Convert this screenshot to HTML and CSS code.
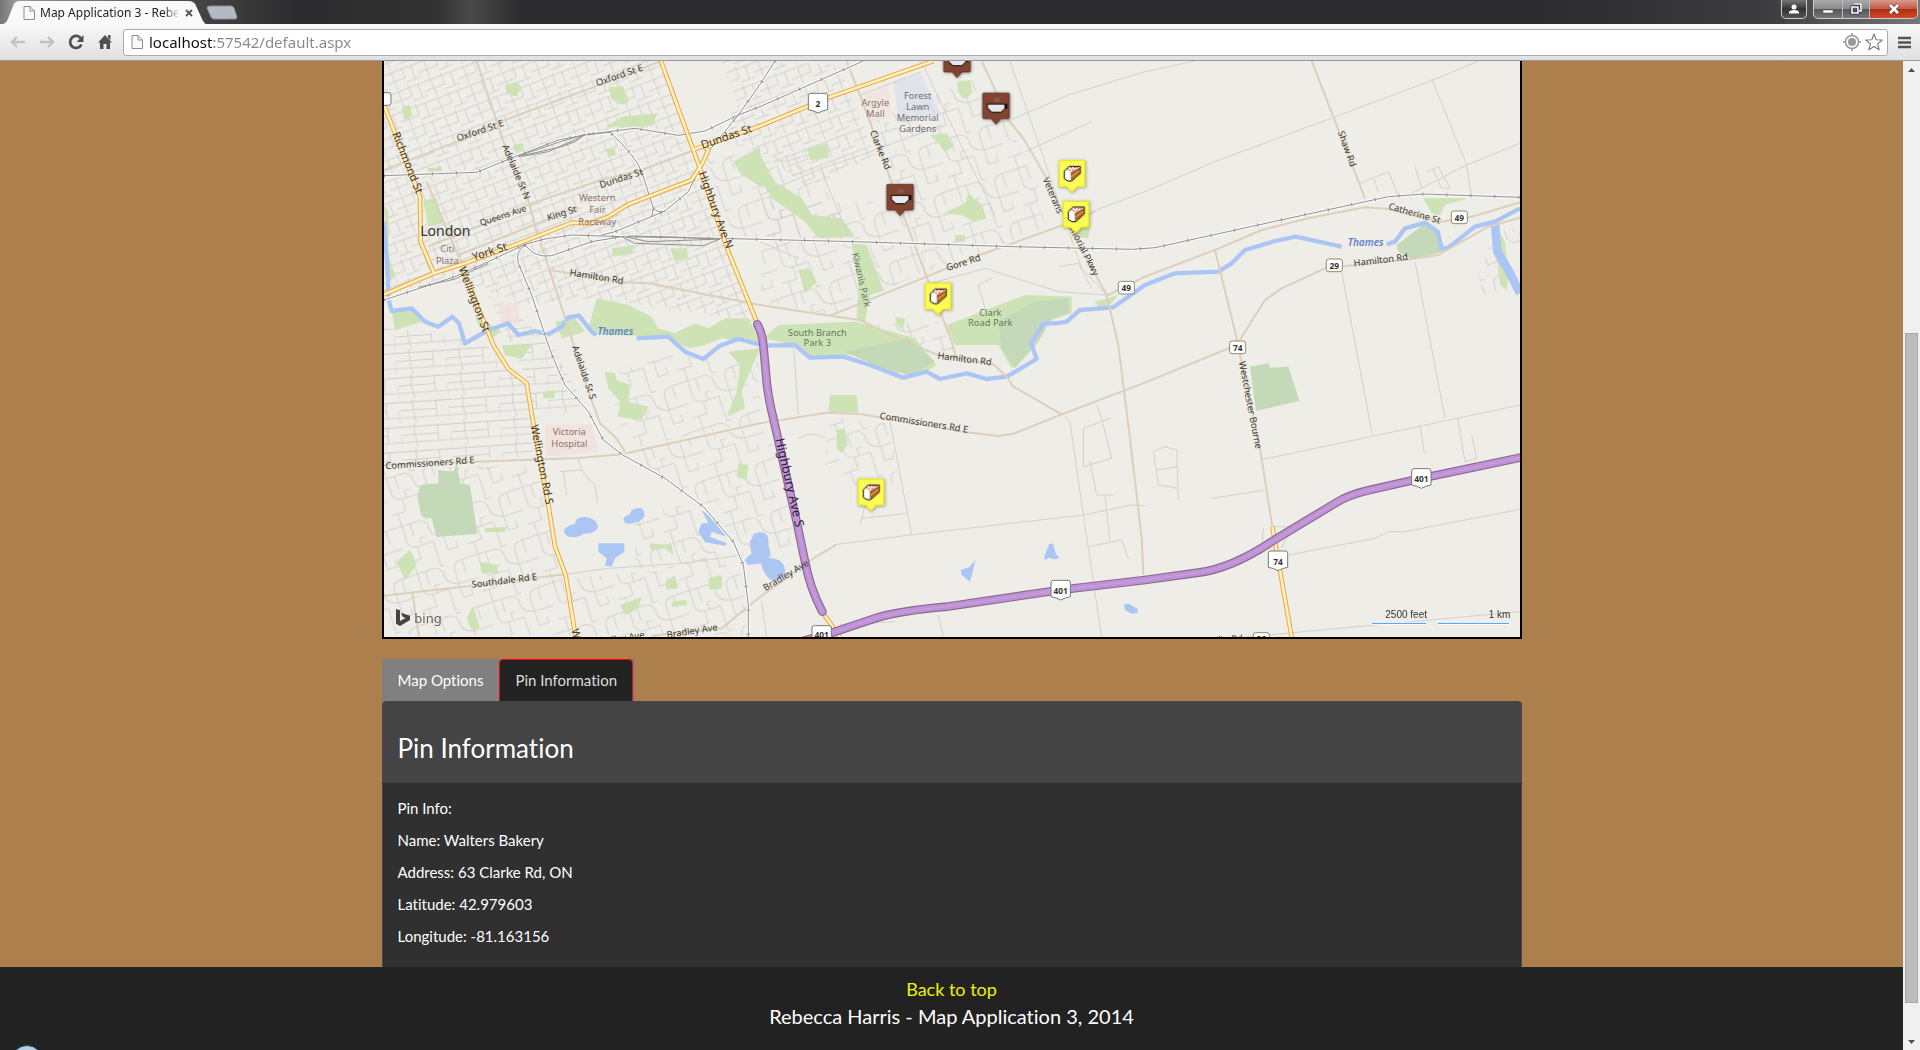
FILE: index.html
```html
<!DOCTYPE html>
<html lang="en">
<head>
<meta charset="utf-8">
<title>Map Application 3 - Rebecca Harris</title>
<link rel="stylesheet" href="styles.css">
</head>
<body>
<header class="browser">
  <div class="tabstrip">
    <div class="browser-tab">
      <svg class="tab-shape" viewBox="0 0 210 25" preserveAspectRatio="none"><path d="M0 25C5 24 7 22 8 19L14 4Q16 1 20 1H190Q195 1 197 4L204 19Q206 24 210 25Z" fill="#f9f9f9"/></svg>
      <svg class="doc-icon" viewBox="0 0 12 14"><path d="M1 .5H7L11.500 5V13.500H1Z" fill="#fafafa" stroke="#8c8c8c"/><path d="M7 .5V5H11.500" fill="none" stroke="#8c8c8c"/></svg>
      <span class="tab-title">Map Application 3 - Rebec</span>
      <button class="tab-close" aria-label="Close tab"><svg viewBox="0 0 8 8"><path d="M1 1L7 7M7 1L1 7" stroke="#555" stroke-width="1.800"/></svg></button>
    </div>
    <button class="new-tab" aria-label="New tab"><svg viewBox="0 0 32 15"><path d="M4 1H25Q27 1 28 3L31 12Q31 14 29 14H8Q6 14 5 12L1 3Q1 1 4 1Z" fill="#b4bac3" stroke="#8a9099"/></svg></button>
    <div class="strip-space"></div>
    <button class="user-button" aria-label="User"><svg viewBox="0 0 10 10"><circle cx="5" cy="3" r="2.500" fill="#fff"/><path d="M0 9.500V8Q1 6 5 6T10 8V9.500Z" fill="#fff"/></svg></button>
    <div class="window-buttons">
      <button class="win-min" aria-label="Minimize"><svg viewBox="0 0 12 12"><rect x="1" y="7" width="10" height="3" fill="#fff" stroke="#445" stroke-width=".5"/></svg></button>
      <button class="win-max" aria-label="Restore"><svg viewBox="0 0 12 12"><path d="M4 1H11V8H9M2 4H8V10H2Z" fill="none" stroke="#334" stroke-width="3"/><path d="M4 1H11V8H9M2 4H8V10H2Z" fill="none" stroke="#fff" stroke-width="1.600"/></svg></button>
      <button class="win-close" aria-label="Close"><svg viewBox="0 0 12 12"><path d="M2 2L10 10M10 2L2 10" stroke="#544" stroke-width="4"/><path d="M2 2L10 10M10 2L2 10" stroke="#fff" stroke-width="2.600"/></svg></button>
    </div>
  </div>
  <div class="toolbar">
    <button class="tool" aria-label="Back"><svg viewBox="0 0 16 16"><path d="M15 8H2M7 3L2 8L7 13" fill="none" stroke="#c2c2c2" stroke-width="2.400"/></svg></button>
    <button class="tool" aria-label="Forward"><svg viewBox="0 0 16 16"><path d="M1 8H14M9 3L14 8L9 13" fill="none" stroke="#c2c2c2" stroke-width="2.400"/></svg></button>
    <button class="tool" aria-label="Reload"><svg viewBox="0 0 16 16"><path d="M13 4.500A6 6 0 1 0 13.500 10.500" fill="none" stroke="#505050" stroke-width="2.800"/><path d="M15.500 1V8H8.500Z" fill="#505050"/></svg></button>
    <button class="tool" aria-label="Home"><svg viewBox="0 0 16 16"><path d="M8 1L15 8.500H13V15H9.500V10H6.500V15H3V8.500H1Z" fill="#505050"/><path d="M11 1H13.500V6L11 4Z" fill="#505050"/></svg></button>
    <div class="omnibox">
      <svg class="doc-icon" viewBox="0 0 12 14"><path d="M1 .5H7L11.500 5V13.500H1Z" fill="#fafafa" stroke="#8c8c8c"/><path d="M7 .5V5H11.500" fill="none" stroke="#8c8c8c"/></svg>
      <input class="url" type="text" aria-label="Address" value="localhost:57542/default.aspx">
      <button class="omni-icon" aria-label="Location"><svg viewBox="0 0 18 18"><circle cx="9" cy="9" r="6.500" fill="none" stroke="#999" stroke-width="1.600"/><circle cx="9" cy="9" r="4" fill="#999"/><path d="M9 0V3M9 15V18M0 9H3M15 9H18" stroke="#999" stroke-width="1.600"/></svg></button>
      <button class="omni-icon" aria-label="Bookmark"><svg viewBox="0 0 18 18"><path d="M9 1L11.200 6.700L17.300 7L12.600 10.900L14.200 16.800L9 13.500L3.800 16.800L5.400 10.900L.7 7L6.800 6.700Z" fill="#fff" stroke="#777" stroke-width="1.100" stroke-linejoin="round"/></svg></button>
    </div>
    <button class="menu" aria-label="Menu"><svg viewBox="0 0 13 13"><path d="M0 2H13M0 6.500H13M0 11H13" stroke="#555" stroke-width="2.600"/></svg></button>
  </div>
</header>

<div class="viewport">
  <div class="page">
    <main class="content">
      <div class="container">
        <div class="map">
          <svg viewBox="27 18 3408 1728" preserveAspectRatio="xMidYMid slice" role="img" aria-label="Map of London, Ontario">
            <defs>
              <pattern id="grid" width="104" height="60" patternUnits="userSpaceOnUse" patternTransform="rotate(-21)"><path class="st" d="M0 8H104M0 36H60M26 8V60M60 0V36M60 50H104M88 8V50"/></pattern>
              <pattern id="rows" width="150" height="74" patternUnits="userSpaceOnUse" patternTransform="rotate(-4)"><path class="st" d="M0 10H150M0 34H110M0 56H150M40 0V34L48 74M110 10V56M150 34V74"/></pattern>
              <pattern id="burbs" width="190" height="150" patternUnits="userSpaceOnUse" patternTransform="rotate(-18)"><path class="st" d="M0 20H70Q95 22 95 50T130 85H190M20 20V70Q22 90 45 92H95V150M45 20V60M45 92V130H0M130 85V40Q132 20 160 20H190M160 20V60M130 85V130H160V110M60 92V70H75M20 130V150M20 0V20M95 0V20H110"/></pattern>
              <g id="coffee">
                <path d="M-38 -92H38Q40 -92 40 -90V-17L38 -15H15L0 2L-15 -15H-38L-40 -17V-90Z" fill="#804430" stroke="#532a1c" stroke-width="2"/>
                <path d="M-5 -78l3 4-3 4 3 4M1 -78l3 4-3 4 3 4M7 -78l3 4-3 4 3 4" fill="none" stroke="#9b8a84" stroke-width="2"/>
                <path d="M24 -57H32V-47H22" fill="none" stroke="#000" stroke-width="4"/>
                <path d="M-26 -59H27V-46L14 -34H-12L-26 -47Z" fill="#e8e8ec" stroke="#000" stroke-width="3"/>
              </g>
              <g id="cake">
                <path d="M-38 -92H38V-15H16L0 2L-16 -15H-38Z" fill="#fbfd57" stroke="#f0ea1d" stroke-width="4"/>
                <path d="M-23 -61L-9 -75H25V-54L-1 -31H-12L-23 -38Z" fill="#fff" stroke="#000" stroke-width="3"/>
                <path d="M-4 -57L24 -72V-54L-3 -32Z" fill="#a75d20"/><path d="M-2 -44L22 -62" stroke="#f0a35a" stroke-width="4"/>
                <path d="M-14 -67h4M-5 -71h4M-8 -63h4M5 -71h4M1 -65h4M13 -72h4" stroke="#e02030" stroke-width="4"/>
              </g>
              <path id="shield" d="M-29 -22Q-29 -29 -22 -29H22Q29 -29 29 -22V20Q15 22 0 30Q-15 22 -29 20Z"/>
              <rect id="box" x="-24" y="-19" width="48" height="38" rx="7"/>
            </defs>
            <rect x="27" y="18" width="3408" height="1728" fill="#eeede7"/>

            <g fill="url(#grid)">
              <path d="M27 18H855L960 300L1140 800L660 730L430 750L300 690L180 680L27 720Z"/>
              <path d="M1040 18H1155L1390 30L1440 150L1500 300L1300 400L1155 290L1010 250L1090 150Z"/>
            </g>
            <path fill="url(#rows)" d="M27 820L230 840L350 880L450 990L480 1205L27 1225ZM340 720L520 850L640 1070L470 1090L460 980Z"/>
            <g fill="url(#burbs)">
              <path d="M1480 200L1830 60L1990 400L2010 520L1660 650L1560 400Z"/>
              <path d="M1160 440H1560L1650 650L1370 780L1160 740Z"/>
              <path d="M980 300H1290L1430 540L1080 545Z"/>
              <path d="M27 1240L490 1230L600 1740H27Z"/>
              <path d="M575 1570L960 1540L1110 1560V1740H620Z"/>
              <path d="M800 1180L1180 1110L1270 1500L1130 1520L1000 1350L780 1230Z"/>
              <path d="M690 960L890 900L1150 920L1155 1100L760 1180Z"/>
              <path d="M1360 1085L1540 1105L1570 1280L1470 1310L1350 1230Z"/>
              <path d="M1400 810L1690 800L1740 890L1600 880Z"/>
              <path d="M3310 660L3360 530L3435 520V560L3380 580L3400 705L3325 718Z"/>
              <path d="M780 1390L940 1340L990 1450L1060 1540L780 1540Z"/>
            </g>

            <g class="park">
              <path d="M390 90L430 80L435 105L425 125L395 115ZM700 95H745L762 140L745 150L710 135ZM80 155L105 150L112 182L88 195ZM690 217L740 185L845 175L835 210L790 218L730 215ZM415 270L445 265V285L420 292ZM145 435L185 430L205 505L160 515ZM1075 320L1155 275L1165 400L1100 360ZM695 285L718 275L722 300L700 305ZM885 580H935L940 608L900 620ZM710 580L780 570L770 595L715 605ZM160 340L200 335V347L160 350Z"/>
              <path d="M665 730L760 750L830 785L850 820L900 835L960 805L1000 820L1050 790L1120 790L1160 870L1100 860L1040 850L990 870L940 880L880 845L690 840L640 820ZM50 770L110 765L140 800L60 825ZM380 870L470 870L440 912L390 900ZM300 780L380 830L350 850L310 810ZM540 800L600 790L630 830L560 850ZM27 450L40 470L40 600L60 660L40 690Z"/>
              <path d="M1155 300L1200 380L1280 430L1310 480L1400 490L1440 545L1330 550L1290 500L1190 430L1155 370ZM1430 565L1475 570L1525 705L1485 720L1470 800L1445 790L1450 680ZM1295 280L1355 265L1362 308L1305 315ZM1745 80L1785 75L1792 115L1765 132L1750 110ZM1665 240L1715 235L1735 275L1710 292L1690 265ZM1705 475L1770 445L1780 415L1820 450L1835 490L1800 500L1760 480ZM1270 645L1300 640L1325 680L1290 715L1280 680ZM1560 785L1590 790L1585 825L1565 810ZM1740 540H1770V560H1740ZM2090 510L2145 510L2140 550L2090 545Z"/>
              <path d="M1715 810L1950 720L2090 725V775L2030 795L1975 860L1985 870L1910 940L1870 870L1740 870ZM1165 850L1210 810L1440 800L1620 850L1685 930L1655 950L1560 955L1430 900L1290 905L1260 870ZM1365 1020H1445L1450 1073L1360 1072ZM1385 1125L1410 1120L1418 1170L1400 1195L1385 1180Z"/>
              <path d="M3145 430H3280L3210 450L3195 480L3170 475ZM2160 740L2230 720L2200 755L2170 755ZM3365 515L3390 560L3400 650L3395 705L3375 690L3365 600ZM690 950L720 955L725 975L765 990L760 1040L820 1055L800 1095L730 1085L735 1040L700 1000ZM1060 890L1155 880L1120 960L1100 1010L1110 1060L1055 1085L1085 1010L1095 930ZM505 1010L540 1005L538 1030L505 1030ZM1090 1225L1120 1230L1115 1275L1085 1265ZM65 1520L105 1485L125 1530L90 1575ZM315 1520L365 1530L370 1555H320ZM825 1465L890 1470L895 1500L870 1480L825 1485ZM870 1580L900 1560L910 1600L875 1605ZM1000 1570L1040 1560L1042 1600L1005 1605ZM735 1650L800 1625L790 1660L750 1680ZM330 1420L395 1415L390 1430L330 1432ZM275 1690L295 1655L315 1720L290 1725ZM890 1640L935 1635V1650L890 1655Z"/>
            </g>
            <g class="park-dark">
              <path d="M135 1290L190 1285V1245L235 1250L245 1225L255 1285L285 1290L307 1437L185 1445L170 1390L140 1385L128 1330Z"/>
              <path d="M2625 935L2680 925L2685 938L2740 935L2773 1037L2643 1068Z"/>
              <path d="M3065 570L3150 505L3185 530L3205 590L3110 612L3070 590Z"/>
              <path d="M1870 800L1980 740L2080 730V775L2030 790L1990 860L1920 940L1880 880ZM1410 890L1600 850L1680 920L1600 960L1500 930Z"/>
            </g>
            <g fill="#f3ddd9"><path d="M510 1110L650 1108L670 1190L515 1205ZM365 745L430 740L435 810L380 800Z" opacity=".7"/><path d="M1450 120L1540 90L1550 190L1480 200Z" opacity=".5"/></g>
            <path d="M1555 80L1635 55L1700 180L1570 190Z" fill="#d9dcec" opacity=".6"/>

            <g class="water">
              <path d="M567 1425Q580 1408 600 1408Q600 1385 630 1386Q665 1390 669 1415Q665 1435 625 1436Q610 1450 580 1445Q568 1440 567 1425ZM745 1390Q755 1380 765 1378Q770 1355 800 1360Q815 1375 805 1390Q780 1410 750 1405ZM670 1465H748V1490L720 1510L710 1535L690 1532L695 1510L670 1490ZM980 1365L1040 1410L1055 1445L1010 1430L1005 1445L1055 1465L1050 1472L990 1462L970 1430L980 1405H1000Z"/>
              <path d="M1140 1435Q1185 1420 1180 1470Q1190 1500 1180 1510Q1230 1510 1230 1550Q1225 1580 1190 1575Q1165 1560 1158 1525L1120 1530L1108 1515L1130 1495L1125 1460ZM1757 1545L1782 1537L1801 1515L1793 1550L1785 1580L1760 1560ZM2008 1505L2022 1468L2034 1465L2042 1495L2053 1510L2035 1513L2022 1508L2010 1516ZM2247 1648L2262 1646L2288 1662V1674L2270 1676L2250 1665Z"/>
            </g>
            <g class="river">
              <path d="M27 500L36 620L42 740L50 768L110 760L150 800L190 815L232 785L252 805L270 865L340 825L400 805L430 840L480 828L520 838L560 815L580 787L612 782L650 830L665 840M785 850L880 845L930 890L985 912L1035 872L1090 852L1170 872L1260 870L1305 908L1405 905L1485 930L1585 968L1655 950L1695 972L1775 955L1835 972L1895 965L1985 912L1968 865L2005 805L2045 805L2075 800L2115 765L2215 757L2310 690L2400 655L2530 650L2570 625L2610 585L2700 558L2762 545L2900 575M3035 568L3060 560L3090 520L3150 503L3188 530L3200 580L3220 578L3300 515L3360 500L3435 460"/>
              <path class="wide" d="M3360 505L3367 590L3400 645L3435 715"/>
            </g>

            <g class="minor">
              <path d="M1155 420L1340 340L1460 300L1700 210M1340 350L1420 540M1455 120L1640 50M1640 18L1710 170L1860 480M1905 18L2120 640L2195 720M1895 200L2080 120L2310 50L2460 18M1950 290L2150 200M2150 470L2310 410L2520 320L3175 75L3310 18M3170 70L3275 330L3290 430M3100 420L3275 330L3435 265M2955 385L3040 350L3070 420M2995 370L3010 410M3120 335L3140 400M3155 350L3190 335L3225 400H3200L3175 345"/>
              <path d="M1255 860L1270 1080M1545 1100L1610 1440M1460 1390L1595 1375M1455 1410L1480 1310M2065 1080L2085 1100L2125 1380L2180 1746M2165 1050L2180 1090L2210 1210L2125 1235L2125 1120L2205 1090M2145 1220L2165 1320L2215 1320M2190 1325L2205 1460M2140 1475L2240 1455L2260 1510M2310 1352L2270 1350L2125 1380L1605 1440L1385 1468"/>
              <path d="M2900 650L2992 1140M3120 620L3210 1090M2655 1215L3435 1050M3135 1110L3148 1195M3248 1088L3270 1220L3305 1210L3290 1140M2335 1190L2370 1175L2405 1185L2410 1335M2335 1190L2350 1290L2408 1300M2345 1245L2408 1235M2510 1330L2665 1306M2740 1500L3000 1450L3040 1430H3090L3435 1363M2610 1746L3435 1670M1690 1680L1705 1746M1160 1640L1175 1746M1395 1710L1560 1700M2665 1420Q2660 1470 2665 1480M2690 1415H2750L2720 1480"/>
              <path d="M1830 640L2050 710L2190 720M1830 640L1650 690M2050 635L2110 625L2150 700M1155 560L1270 610M1850 670L1810 690L1830 760M1270 1150Q1310 1125 1350 1150M610 1210Q620 1260 660 1290L668 1345M555 1250L620 1245M565 1250L575 1320M570 1558L700 1540L920 1525L1105 1500"/>
            </g>
            <g class="tan">
              <path d="M27 345L240 262L390 195L660 95L858 18M305 18L385 260L460 435L485 530L525 650L590 850L650 1035L675 1105L720 1145L750 1190M155 380L225 545L262 630M470 445L680 375L800 345L955 287M160 575L320 510L470 445M250 600L500 500L610 455"/>
              <path d="M525 645L750 682L820 685L1155 750L1365 782L1455 795L1600 865L1690 900L1855 928L1895 965L1915 995L2060 1078"/>
              <path d="M27 1230L300 1220L600 1210L740 1198L1155 1105L1355 1073L1455 1077L1775 1132L1870 1143L1915 1136L2060 1078L2310 983L2585 870L2670 735L2720 700L2850 640L3110 612L3190 600L3340 515L3435 488"/>
              <path d="M1365 782L1655 665L1815 600L2065 510L2160 470M2195 722L2310 665L2520 585L2660 525L2800 490L2970 457L3040 462L3200 500L3290 485L3435 442M2520 585L2585 850L2595 900L2655 1180L2692 1415M2810 18L2970 430"/>
              <path d="M1415 18L1485 200L1545 370L1585 480L1655 665L1730 860L1745 910M1820 18L1863 110L1900 195L1945 250L2015 370L2085 520L2195 720L2230 870L2265 1150L2300 1450L2305 1560"/>
              <path d="M27 1622L290 1592L570 1558M112 1612L132 1746M830 1742L1040 1720L1150 1630L1315 1510L1385 1468"/>
            </g>
            <g class="rail-bed"><path id="rails" d="M27 362L160 357L305 352L420 305L550 255L640 238L780 220L910 241L990 228L1090 180L1155 155L1465 18M1200 18L1155 88L1090 180L1000 290L940 410L870 468L720 530L680 540M640 238L705 232Q780 300 800 350L835 460L830 485M835 460Q850 475 870 468M27 735L240 665L340 620L450 568L510 552L590 540L740 545L1070 551L1155 553L1435 560L1695 568L1915 575L2270 583L2340 578L2695 500L3040 425L3145 417L3435 427M450 570Q480 610 530 602L650 560L740 545M450 570Q420 590 430 625L470 720L520 870L535 910L570 990L640 1070L685 1155L740 1198L870 1270L985 1355L1075 1460L1105 1530L1120 1650V1746"/></g>
            <use href="#rails" class="rail"/><use href="#rails" class="ties"/>
            <path class="rail" d="M430 305L560 275L600 260L630 238M430 303L550 262L630 238M440 304L520 290L630 240M740 545L780 565L985 572L1035 552M750 545L820 560L1035 552M760 543L900 546L1035 552M130 697L240 672L340 625"/>

            <g class="road-edge"><path id="yellow" d="M27 150L135 425L137 560L177 655M27 718L177 655L270 625L440 562L590 503L650 505L700 485L760 448L950 375L985 320L1000 285L985 275M958 283L1155 213L1295 155L1355 130L1675 18M858 18L975 340L1060 590L1145 800M262 640L355 870L400 942L455 985L475 1105L520 1350L540 1475L572 1560L602 1746M2692 1415L2750 1746M1345 1675L1395 1746"/></g>
            <use href="#yellow" class="road-mid"/><use href="#yellow" class="road-core"/>
            <g class="hwy-edge"><path id="hwy" d="M1147 808Q1162 835 1165 870L1175 980Q1180 1030 1195 1090L1265 1400L1290 1520Q1305 1600 1342 1670M1290 1756L1375 1732L1500 1690Q1570 1668 1715 1655L2055 1605L2310 1575L2470 1553Q2570 1540 2690 1460L2880 1345Q2920 1320 2980 1306L3130 1272L3435 1208"/></g>
            <use href="#hwy" class="hwy"/><use href="#hwy" class="hwy-core"/>

            <g class="label">
              <text transform="translate(315 226) rotate(-19)">Oxford St E</text>
              <text transform="translate(733 60) rotate(-19)">Oxford St E</text>
              <text transform="translate(425 350) rotate(67)">Adelaide St N</text>
              <text transform="translate(384 482) rotate(-18)" class="small">Queens Ave</text>
              <text transform="translate(560 474) rotate(-18)">King St</text>
              <text transform="translate(738 369) rotate(-18)">Dundas St</text>
              <text transform="translate(665 664) rotate(9)">Hamilton Rd</text>
              <text transform="translate(628 952) rotate(71)">Adelaide St S</text>
              <text transform="translate(1517 284) rotate(68)">Clarke Rd</text>
              <text transform="translate(2035 421) rotate(67)">Veterans</text>
              <text transform="translate(2129 588) rotate(63)">morial Pkwy</text>
              <text transform="translate(1765 622) rotate(-18)">Gore Rd</text>
              <text transform="translate(2917 281) rotate(70)">Shaw Rd</text>
              <text transform="translate(3119 474) rotate(16)">Catherine St</text>
              <text transform="translate(3017 614) rotate(-7)">Hamilton Rd</text>
              <text transform="translate(1769 911) rotate(7)">Hamilton Rd</text>
              <text transform="translate(1647 1102) rotate(9)">Commissioners Rd E</text>
              <text transform="translate(165 1223) rotate(-4)">Commissioners Rd E</text>
              <text transform="translate(388 1576) rotate(-7)">Southdale Rd E</text>
              <text transform="translate(951 1727) rotate(-9)">Bradley Ave</text>
              <text transform="translate(732 1750) rotate(-9)">Bradley Ave</text>
              <text transform="translate(1232 1560) rotate(-31)">Bradley Ave</text>
              <text transform="translate(2627 1050) rotate(79)">Westchester Bourne</text>
              <text transform="translate(2530 1754) rotate(-4)">Crumlin Rd</text>
            </g>
            <g class="label major">
              <text transform="translate(100 322) rotate(68)">Richmond St</text>
              <text transform="translate(343 588) rotate(-18)">York St</text>
              <text transform="translate(300 732) rotate(69)">Wellington St</text>
              <text transform="translate(503 1228) rotate(79)">Wellington Rd S</text>
              <text transform="translate(622 1802) rotate(76)">Wellington</text>
              <text transform="translate(1053 243) rotate(-19)">Dundas St</text>
              <text transform="translate(1025 464) rotate(70)">Highbury Ave N</text>
              <text transform="translate(1246 1282) rotate(77)" class="highway">Highbury Ave S</text>
            </g>
            <g class="label place">
              <text x="667" y="428">Western</text><text x="667" y="464">Fair</text><text x="667" y="500">Raceway</text>
              <text x="217" y="581">Citi</text><text x="217" y="616">Plaza</text>
              <text x="1501" y="141">Argyle</text><text x="1501" y="176">Mall</text>
              <text x="583" y="1130">Victoria</text><text x="583" y="1166">Hospital</text>
            </g>
            <g class="label garden">
              <text x="1628" y="122">Forest</text><text x="1628" y="155">Lawn</text><text x="1628" y="188">Memorial</text><text x="1628" y="221">Gardens</text>
            </g>
            <g class="label green">
              <text x="1846" y="773">Clark</text><text x="1846" y="803">Road Park</text>
              <text x="1327" y="833">South Branch</text><text x="1327" y="863">Park 3</text>
              <text transform="translate(1460 674) rotate(77)">Kiwanis Park</text>
            </g>
            <g class="label stream"><text x="721" y="829">Thames</text><text x="2972" y="562">Thames</text></g>
            <text class="label city" x="211" y="527">London</text>

            <g class="sign">
              <use href="#shield" x="1329" y="144"/><use href="#shield" x="2057" y="1605"/><use href="#shield" x="3139" y="1270"/><use href="#shield" x="1340" y="1741"/><use href="#shield" x="2709" y="1517"/><use href="#box" x="24" y="132"/>
              <use href="#box" class="county" x="2254" y="698"/><use href="#box" class="county" x="3253" y="487"/><use href="#box" class="county" x="2878" y="631"/><use href="#box" class="county" x="2588" y="877"/><use href="#box" class="county" x="2659" y="1752"/>
            </g>
            <g class="label number">
              <text x="1329" y="144">2</text><text x="2057" y="1605">401</text><text x="3139" y="1270">401</text><text x="1340" y="1738">401</text><text x="2709" y="1519">74</text>
              <text x="2254" y="698">49</text><text x="3253" y="487">49</text><text x="2878" y="631">29</text><text x="2588" y="877">74</text><text x="2659" y="1750">36</text>
            </g>

            <g class="pins">
              <use href="#coffee" x="1746" y="66"/><use href="#coffee" x="1863" y="206"/><use href="#coffee" x="1575" y="480"/>
              <use href="#cake" x="2091" y="409"/><use href="#cake" x="2103" y="531"/><use href="#cake" x="1689" y="777"/><use href="#cake" x="1488" y="1365"/>
            </g>

            <g class="bing"><path d="M63 1662L75 1666V1698L92 1689L83 1685L78 1673L105 1682V1695L75 1713L63 1706Z" fill="#444"/><text x="118" y="1703">bing</text></g>
            <g class="scale"><path class="bar-edge" d="M2989 1705H3156M3187 1705H3404"/><path class="bar" d="M2991 1705H3154M3189 1705H3402"/><text x="3156" y="1688">2500 feet</text><text x="3406" y="1688">1 km</text></g>
          </svg>
        </div>

        <div class="tabs" role="tablist">
          <button role="tab" class="tab" aria-selected="false">Map Options</button>
          <button role="tab" class="tab active" aria-selected="true">Pin Information</button>
        </div>
        <section class="panel">
          <h2 class="panel-title">Pin Information</h2>
          <div class="panel-body">
            <p>Pin Info:</p>
            <p>Name: Walters Bakery</p>
            <p>Address: 63 Clarke Rd, ON</p>
            <p>Latitude: 42.979603</p>
            <p>Longitude: -81.163156</p>
          </div>
        </section>
      </div>
    </main>
    <footer class="footer">
      <a class="top-link" href="#">Back to top</a>
      <p class="credit">Rebecca Harris - Map Application 3, 2014</p>
      <span class="orb"></span>
    </footer>
  </div>
  <div class="scrollbar">
    <button class="arrow" aria-label="Scroll up"><svg viewBox="0 0 7 4"><path d="M0 4L3.500 0L7 4Z" fill="#505050"/></svg></button>
    <div class="track-before"></div>
    <div class="thumb"></div>
    <div class="track-after"></div>
    <button class="arrow" aria-label="Scroll down"><svg viewBox="0 0 7 4"><path d="M0 0L3.500 4L7 0Z" fill="#505050"/></svg></button>
  </div>
</div>
</body>
</html>
```
FILE: styles.css
```css
* { box-sizing: border-box; }
html, body { height: 100%; }
body {
  margin: 0;
  display: flex;
  flex-direction: column;
  overflow: hidden;
  font-family: Lato, sans-serif;
  font-size: 15px;
  font-variant-ligatures: none;
  color: #fff;
  background: #ad7f4c;
}
button { margin: 0; padding: 0; border: 0; background: none; font: inherit; font-variant-ligatures: none; color: inherit; }
svg { display: block; }
p, h2 { margin: 0; }

/* Browser window */
.browser { flex: none; font-family: "Noto Sans", sans-serif; color: #222; }
.tabstrip {
  height: 24px;
  display: flex;
  align-items: flex-start;
  background: linear-gradient(90deg, #777 0, #999 16px, #444 200px, #2b2b2d 300px, #333 440px, #4a4a4a 470px, #2c2c2e 520px, #2c2c2e 80%, #3c3c3e 92%, #777 100%);
}
.browser-tab { position: relative; width: 208px; height: 24px; display: flex; align-items: center; padding: 1px 14px 0 23px; }
.tab-shape { position: absolute; left: 0; top: 0; width: 208px; height: 25px; }
.doc-icon { position: relative; flex: none; width: 12px; height: 14px; }
.tab-title {
  position: relative;
  width: 138px;
  margin-left: 5px;
  overflow: hidden;
  white-space: nowrap;
  font-size: 12px;
  line-height: 18px;
  mask-image: linear-gradient(90deg, #000 124px, transparent 140px);
}
.tab-close { position: relative; margin-left: 7px; }
.tab-close svg { width: 8px; height: 8px; }
.new-tab { margin-top: 5px; margin-left: -2px; }
.new-tab svg { width: 32px; height: 15px; }
.strip-space { flex: 1; }
.user-button, .window-buttons { height: 19px; border: 1px solid #ccc; border-top: 0; border-radius: 0 0 5px 5px; background: linear-gradient(#777, #333 50%, #555); }
.user-button { width: 26px; display: grid; place-items: center; }
.user-button svg { width: 10px; height: 10px; }
.window-buttons { display: flex; margin: 0 2px 0 6px; overflow: hidden; background: linear-gradient(#aaa, #888 50%, #555 50%, #777); }
.window-buttons button { display: grid; place-items: center; border-right: 1px solid #bbb; }
.window-buttons svg { width: 12px; height: 12px; }
.window-buttons .win-min { width: 29px; }
.window-buttons .win-max { width: 27px; }
.window-buttons .win-close { width: 47px; border-right: 0; background: linear-gradient(#d99a8c, #c05a45 50%, #b02a12 50%, #d04a28); }

.toolbar {
  height: 37px;
  display: flex;
  align-items: center;
  padding: 0 9px 0 10px;
  background: linear-gradient(#f9f9f9, #e0dfe1);
  border-bottom: 1px solid #989898;
}
.tool { width: 16px; margin-right: 13px; }
.tool svg { width: 16px; height: 16px; }
.omnibox {
  flex: 1;
  height: 27px;
  margin: 0 10px 0 -3px;
  padding: 0 4px 0 7px;
  display: flex;
  align-items: center;
  background: #fff;
  border: 1px solid #ababab;
  border-radius: 3px;
}
.url {
  flex: 1;
  min-width: 0;
  height: 24px;
  margin: 0 8px 0 6px;
  padding: 0;
  border: 0;
  outline: 0;
  font: 15px "Noto Sans", sans-serif;
  color: transparent;
  background: linear-gradient(90deg, #111 65px, #888 65px);
  background-clip: text;
}
.omni-icon { margin-left: 4px; }
.omni-icon svg { width: 18px; height: 18px; }
.menu svg { width: 13px; height: 13px; }

/* Page */
.viewport { flex: 1; min-height: 0; display: flex; }
.page { flex: 1; min-width: 0; display: flex; flex-direction: column; }
.content { flex: 1; min-height: 0; overflow: hidden; }
.container { max-width: 1140px; margin: 0 auto; }
.map { border: 2px solid #000; border-top: 0; }
.map svg { width: 100%; height: auto; }

.tabs { display: table; margin-top: 20px; padding-right: 2px; background: #808080; font-size: 0; }
.tab { height: 43px; padding: 0 15px 2px; border: 1px solid transparent; border-radius: 4px 4px 0 0; font-size: 15px; }
.tab.active { background: #222; border-color: #f00; color: #ddd; }

.panel { position: relative; margin-top: -1px; min-height: 320px; background: #303030; border: 1px solid #464646; border-radius: 4px; }
.panel-title { padding: 31px 15px 19px; background: #444; font-size: 26px; font-weight: 400; line-height: 31px; }
.panel-body { padding: 14px 15px; line-height: 22px; }
.panel-body p { margin-bottom: 10px; }

.footer { position: relative; flex: none; height: 83px; padding-top: 9px; overflow: hidden; text-align: center; background: #222; }
.top-link { display: block; color: #f0f000; font-size: 18px; line-height: 26px; text-decoration: none; }
.credit { font-size: 20px; line-height: 28px; }
.orb { position: absolute; left: 11px; bottom: -27px; width: 32px; height: 32px; border-radius: 50%; background: #b8d0e2; border: 1px solid #16486c; }

.scrollbar { flex: none; width: 17px; display: flex; flex-direction: column; align-items: center; background: #f0f0f0; }
.arrow { flex: none; height: 17px; }
.arrow svg { width: 7px; height: 4px; }
.track-before { flex: 256; }
.thumb { flex: 669; width: 13px; background: #bcbcbc; border: 1px solid #a8a8a8; }
.track-after { flex: 30; }

/* Map drawing */
.st { fill: none; stroke: #d3d1cf; stroke-width: 3; }
.minor { fill: none; stroke: #d3d1cd; stroke-width: 3; }
.tan { fill: none; stroke: #dbd0bb; stroke-width: 6; stroke-linejoin: round; }
.park { fill: #cde3b5; }
.park-dark { fill: #c3d9b8; }
.water { fill: #abc6f2; }
.river { fill: none; stroke: #abc6f5; stroke-width: 13; stroke-linejoin: round; }
.river .wide { stroke-width: 26; }
.rail-bed { fill: none; stroke: #f7f7f5; stroke-width: 11; }
.rail { fill: none; stroke: #929292; stroke-width: 3; }
.ties { fill: none; stroke: #929292; stroke-width: 10; stroke-dasharray: 3 69; }
.road-edge { fill: none; stroke: #e9aa48; stroke-width: 14; stroke-linejoin: round; }
.road-mid { fill: none; stroke: #ffe9a8; stroke-width: 8; }
.road-core { fill: none; stroke: #fff8df; stroke-width: 3; }
.hwy-edge { fill: none; stroke: #8c6790; stroke-width: 26; stroke-linecap: round; }
.hwy { stroke: #be93d6; stroke-width: 19; fill: none; stroke-linecap: round; }
.hwy-core { stroke: #c9a3dd; stroke-width: 3; fill: none; }
.label { font-family: "Noto Sans", sans-serif; font-size: 28px; fill: #3c3a35; text-anchor: middle; dominant-baseline: central; }
.label .small { font-size: 26px; }
.major { font-size: 33px; }
.major .highway { font-size: 38px; fill: #2d1c38; }
.place { fill: #8a7370; }
.garden { fill: #6c6c78; }
.green { font-size: 28px; fill: #5e7a5a; }
.stream { font-size: 30px; font-weight: 600; font-style: italic; fill: #5f83cb; }
.city { font-size: 42px; fill: #333; }
.number { font-size: 25px; font-weight: 700; fill: #333; }
.sign { fill: #fff; stroke: #777; stroke-width: 3; }
.sign .county { stroke: #8e8b6c; }
.pins { filter: drop-shadow(2px 2px 4px rgba(0, 0, 0, .35)); }
.bing { font-family: "Noto Sans", sans-serif; font-size: 39px; fill: #666; }
.scale { font-family: "Liberation Sans", Arial, sans-serif; font-size: 30px; fill: #333; text-anchor: end; }
.bar-edge { stroke: #fff; stroke-width: 9; }
.bar { stroke: #3d97f5; stroke-width: 3; }
```
